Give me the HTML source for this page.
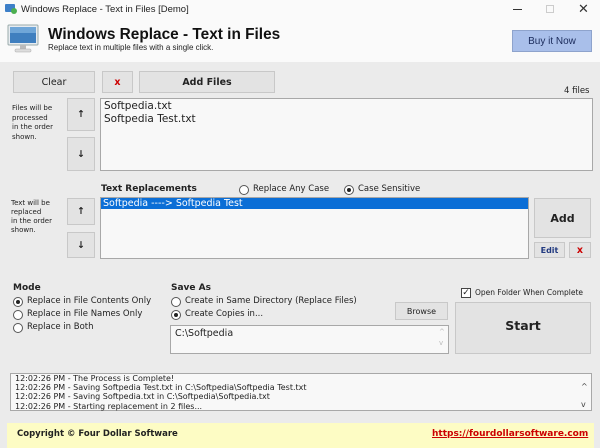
<!DOCTYPE html>
<html><head><meta charset="utf-8"><style>
*{margin:0;padding:0;box-sizing:border-box}
body{width:600px;height:448px;overflow:hidden;background:#ebebeb;font-family:"DejaVu Sans","Liberation Sans",sans-serif;font-size:9px;color:#222;position:relative}
.a{position:absolute}
.btn{position:absolute;background:#e3e3e3;border:1px solid #c8c8c8;display:flex;align-items:center;justify-content:center;color:#222;font-size:9.5px}
.box{position:absolute;background:#f8f8f8;border:1px solid #a8a8a8}
.b{font-weight:bold}
.rad{position:absolute;width:10px;height:10px;border:1px solid #555;border-radius:50%;background:#fff}
.rad.on::after{content:"";position:absolute;left:2px;top:2px;width:4px;height:4px;border-radius:50%;background:#222}
.lbl{position:absolute;font-size:8.5px;white-space:nowrap}
</style></head><body>
<div class="a" style="left:0;top:0;width:600px;height:62px;background:#fafafa"></div>
<div class="a" style="left:5px;top:4px;width:10px;height:8px;background:#3d7fc8;border-radius:1px"></div>
<div class="a" style="left:11px;top:8px;width:6px;height:6px;background:#4caf50;border-radius:50%"></div>
<div class="lbl" style="left:21px;top:4px;font-family:'Liberation Sans',sans-serif;font-size:9.5px;color:#222">Windows Replace - Text in Files [Demo]</div>
<div class="a" style="left:513px;top:9px;width:9px;height:1px;background:#333"></div>
<div class="a" style="left:546px;top:5px;width:8px;height:8px;border:1px solid #ccc"></div>
<div class="lbl" style="left:578px;top:1px;font-family:'Liberation Sans',sans-serif;font-size:13px;color:#333">✕</div>
<svg class="a" style="left:7px;top:24px" width="32" height="30" viewBox="0 0 32 30">
<rect x="1" y="1" width="30" height="20" rx="1" fill="#e8ecf0" stroke="#9aa"/>
<rect x="3" y="3" width="26" height="16" fill="#3f7fbf"/>
<rect x="3" y="3" width="26" height="6" fill="#6fa6d8"/>
<rect x="13" y="21" width="6" height="4" fill="#bbb"/>
<rect x="8" y="25" width="16" height="3" rx="1" fill="#ddd" stroke="#aaa" stroke-width=".5"/>
</svg>
<div class="lbl" style="left:48px;top:26px;font-family:'Liberation Sans',sans-serif;font-weight:bold;font-size:15.4px;color:#111">Windows Replace - Text in Files</div>
<div class="lbl" style="left:48px;top:43px;font-family:'Liberation Sans',sans-serif;font-size:8px;color:#222">Replace text in multiple files with a single click.</div>
<div class="btn" style="left:512px;top:30px;width:80px;height:22px;background:#a9bfea;border-color:#8ea3cc;font-family:'Liberation Sans',sans-serif;font-size:10px;color:#1a2a5a">Buy it Now</div>
<div class="btn" style="left:13px;top:71px;width:82px;height:22px">Clear</div>
<div class="btn b" style="left:102px;top:71px;width:31px;height:22px;color:#c00">x</div>
<div class="btn b" style="left:139px;top:71px;width:136px;height:22px">Add Files</div>
<div class="lbl" style="left:564px;top:86px;font-size:8.5px">4 files</div>
<div class="lbl" style="left:12px;top:104px;font-size:7px;line-height:9.5px">Files will be<br>processed<br>in the order<br>shown.</div>
<div class="btn b" style="left:67px;top:98px;width:28px;height:33px">↑</div>
<div class="btn b" style="left:67px;top:137px;width:28px;height:34px">↓</div>
<div class="box" style="left:100px;top:98px;width:493px;height:73px;padding:1px 3px;font-size:10.5px;line-height:13px">Softpedia.txt<br>Softpedia Test.txt</div>
<div class="lbl b" style="left:101px;top:184px;font-size:9px">Text Replacements</div>
<div class="rad" style="left:239px;top:185px"></div>
<div class="lbl" style="left:253px;top:184px">Replace Any Case</div>
<div class="rad on" style="left:344px;top:185px"></div>
<div class="lbl" style="left:358px;top:184px">Case Sensitive</div>
<div class="lbl" style="left:11px;top:199px;font-size:7px;line-height:9px">Text will be<br>replaced<br>in the order<br>shown.</div>
<div class="btn b" style="left:67px;top:198px;width:28px;height:27px">↑</div>
<div class="btn b" style="left:67px;top:232px;width:28px;height:26px">↓</div>
<div class="box" style="left:100px;top:197px;width:429px;height:62px"></div>
<div class="a" style="left:101px;top:198px;width:427px;height:11px;background:#0b6ed6;color:#fff;font-size:9.5px;line-height:11px;padding-left:2px">Softpedia ----&gt; Softpedia Test</div>
<div class="btn b" style="left:534px;top:198px;width:57px;height:40px;font-size:11px">Add</div>
<div class="btn b" style="left:534px;top:242px;width:31px;height:16px;color:#223a80;font-size:8px">Edit</div>
<div class="btn b" style="left:569px;top:242px;width:22px;height:16px;color:#c00">x</div>
<div class="lbl b" style="left:13px;top:283px;font-size:9px">Mode</div>
<div class="rad on" style="left:13px;top:297px"></div><div class="lbl" style="left:27px;top:296px">Replace in File Contents Only</div>
<div class="rad" style="left:13px;top:310px"></div><div class="lbl" style="left:27px;top:309px">Replace in File Names Only</div>
<div class="rad" style="left:13px;top:323px"></div><div class="lbl" style="left:27px;top:322px">Replace in Both</div>
<div class="lbl b" style="left:171px;top:283px;font-size:9px">Save As</div>
<div class="rad" style="left:171px;top:297px"></div><div class="lbl" style="left:185px;top:296px">Create in Same Directory (Replace Files)</div>
<div class="rad on" style="left:171px;top:310px"></div><div class="lbl" style="left:185px;top:309px">Create Copies in...</div>
<div class="btn" style="left:395px;top:302px;width:53px;height:18px;font-size:8px">Browse</div>
<div class="box" style="left:170px;top:325px;width:279px;height:29px;padding:2px 4px;font-size:9.5px">C:\Softpedia</div>
<div class="lbl" style="left:439px;top:327px;color:#bbb;font-size:7px;line-height:11px">^<br>v</div>
<div class="a" style="left:461px;top:288px;width:10px;height:10px;border:1px solid #444;background:#fff;font-size:9px;line-height:8px;text-align:center">✓</div>
<div class="lbl" style="left:475px;top:288px;font-size:7.5px">Open Folder When Complete</div>
<div class="btn b" style="left:455px;top:302px;width:136px;height:52px;font-size:12.5px;padding-bottom:6px">Start</div>
<div class="box" style="left:10px;top:373px;width:582px;height:38px;padding:0 4px;font-size:8px;line-height:9.2px">12:02:26 PM - The Process is Complete!<br>12:02:26 PM - Saving Softpedia Test.txt in C:\Softpedia\Softpedia Test.txt<br>12:02:26 PM - Saving Softpedia.txt in C:\Softpedia\Softpedia.txt<br>12:02:26 PM - Starting replacement in 2 files...</div>
<div class="lbl" style="left:581px;top:378px;font-size:8px;line-height:18px;color:#444">^<br>v</div>
<div class="a" style="left:7px;top:423px;width:587px;height:25px;background:#fdfcc4"></div>
<div class="lbl b" style="left:17px;top:429px;font-size:8.5px">Copyright © Four Dollar Software</div>
<div class="lbl b" style="left:432px;top:429px;font-size:9px;color:#c00;text-decoration:underline">https://fourdollarsoftware.com</div>
</body></html>
